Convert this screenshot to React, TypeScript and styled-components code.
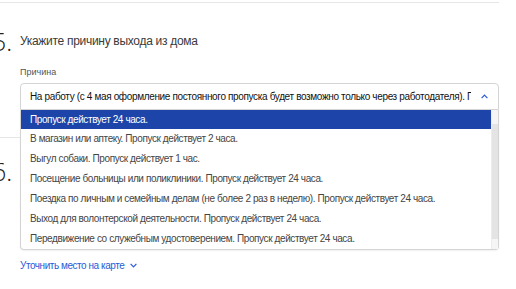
import styled, { createGlobalStyle } from "styled-components";

const GlobalStyle = createGlobalStyle`
  html, body {
    margin: 0;
    padding: 0;
    background: #fff;
    overflow: hidden;
  }
  body {
    font-family: "Liberation Sans", Arial, sans-serif;
    color: #222;
  }
`;

const REASONS = [
  "Пропуск действует 24 часа.",
  "В магазин или аптеку. Пропуск действует 2 часа.",
  "Выгул собаки. Пропуск действует 1 час.",
  "Посещение больницы или поликлиники. Пропуск действует 24 часа.",
  "Поездка по личным и семейным делам (не более 2 раз в неделю). Пропуск действует 24 часа.",
  "Выход для волонтерской деятельности. Пропуск действует 24 часа.",
  "Передвижение со служебным удостоверением. Пропуск действует 24 часа.",
];

const Page = styled.div`
  width: 499px;
  padding-top: 2px;
`;

const Section = styled.section<{ $top: number; $bottom: number }>`
  border-top: 1px solid #e6e6e6;
  padding: ${(p) => p.$top}px 0 ${(p) => p.$bottom}px;
`;

const Header = styled.div`
  display: flex;
  align-items: center;
  height: 22px;
`;

const Num = styled.span`
  width: 28px;
  margin-left: -8px;
  font-family: "Open Sans", "Liberation Sans", sans-serif;
  font-weight: 300;
  font-size: 25px;
  line-height: 22px;
  color: #222;
`;

const Title = styled.h2`
  margin: 0;
  font-family: "Liberation Sans", Arial, sans-serif;
  font-weight: normal;
  font-size: 12px;
  letter-spacing: -0.3px;
  color: #3a3a3a;
`;

const Field = styled.div<{ $gap: number }>`
  padding-left: 20px;
  margin-top: ${(p) => p.$gap}px;
`;

const Label = styled.div`
  font-size: 9px;
  line-height: 11px;
  color: #555;
`;

const SelectWrap = styled.div`
  position: relative;
  margin-top: 5px;
`;

const Select = styled.div<{ $open?: boolean }>`
  box-sizing: border-box;
  height: 27px;
  display: flex;
  align-items: center;
  gap: 10px;
  padding: 0 10px 0 9px;
  border: 1px solid #d4d4d4;
  border-radius: ${(p) => (p.$open ? "4px 4px 0 0" : "4px")};
  background: #fff;
`;

const Value = styled.span`
  flex: 1;
  overflow: hidden;
  white-space: nowrap;
  font-size: 10px;
  letter-spacing: -0.35px;
  color: #111;
`;

const Chevron = styled.svg`
  flex-shrink: 0;
  width: 7px;
  height: 5px;
  stroke: #2a5bd7;
  fill: none;
  stroke-width: 1.2;
`;

const Dropdown = styled.div`
  position: absolute;
  z-index: 5;
  top: 100%;
  left: 0;
  right: 0;
  display: flex;
  background: #fff;
  border: 1px solid #d4d4d4;
  border-top: none;
  border-radius: 0 0 4px 4px;
  box-shadow: 0 1px 2px rgba(0, 0, 0, 0.06);
`;

const List = styled.ul`
  flex: 1;
  margin: 0;
  padding: 0;
  list-style: none;
`;

const Option = styled.li<{ $selected?: boolean }>`
  height: ${(p) => (p.$selected ? 19 : 20)}px;
  line-height: ${(p) => (p.$selected ? 19 : 20)}px;
  padding-left: 9px;
  white-space: nowrap;
  font-size: 10px;
  letter-spacing: -0.4px;
  color: ${(p) => (p.$selected ? "#fff" : "#454545")};
  background: ${(p) => (p.$selected ? "#1d44a9" : "transparent")};
`;

const Track = styled.div`
  width: 6px;
  display: flex;
  flex-direction: column;
  padding: 14px 0 10px;
  background: #f5f5f5;
  border-left: 1px solid #ececec;
`;

const Thumb = styled.div`
  flex: 1;
  background: #e4e4e4;
`;

const Input = styled.div`
  box-sizing: border-box;
  height: 27px;
  margin-top: 7px;
  border: 1px solid #d4d4d4;
  border-radius: 4px;
`;

const MapLink = styled.a`
  display: inline-flex;
  align-items: center;
  gap: 6px;
  margin-left: 20px;
  margin-top: 16px;
  font-size: 10px;
  letter-spacing: -0.45px;
  line-height: 13px;
  color: #2a5bd7;
  text-decoration: none;
`;

export default function App() {
  return (
    <>
      <GlobalStyle />
      <Page>
        <Section $top={27} $bottom={27}>
          <Header>
            <Num>5.</Num>
            <Title>Укажите причину выхода из дома</Title>
          </Header>
          <Field $gap={15}>
            <Label>Причина</Label>
            <SelectWrap>
              <Select $open>
                <Value>
                  На работу (с 4 мая оформление постоянного пропуска будет
                  возможно только через работодателя). Пропуск действует 24 часа.
                </Value>
                <Chevron viewBox="0 0 7 5">
                  <path d="M0.6 4.2 L3.5 1.2 L6.4 4.2" />
                </Chevron>
              </Select>
              <Dropdown>
                <List>
                  {REASONS.map((r, i) => (
                    <Option key={r} $selected={i === 0}>
                      {r}
                    </Option>
                  ))}
                </List>
                <Track>
                  <Thumb />
                </Track>
              </Dropdown>
            </SelectWrap>
          </Field>
        </Section>
        <Section $top={22} $bottom={20}>
          <Header>
            <Num>6.</Num>
            <Title>Укажите адрес</Title>
          </Header>
          <Field $gap={16}>
            <Label>Адрес</Label>
            <Input />
          </Field>
          <MapLink href="#">
            Уточнить место на карте
            <Chevron viewBox="0 0 7 5">
              <path d="M0.6 0.8 L3.5 3.8 L6.4 0.8" />
            </Chevron>
          </MapLink>
        </Section>
      </Page>
    </>
  );
}
